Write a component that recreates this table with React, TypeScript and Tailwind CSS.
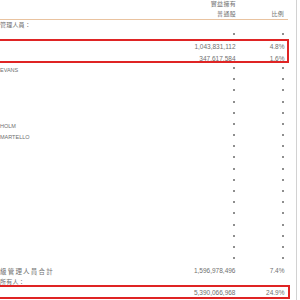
import React from 'react';

type Row = {
  label?: string;
  labelClass?: string;
  shares?: string;
  pct?: string;
  dash?: boolean;
};

const CJK = "font-['Noto_Sans_CJK_TC','Noto_Sans_CJK_SC',sans-serif]";
const LATIN = "font-['Liberation_Sans',Arial,sans-serif]";

const ROWS: Row[] = [
  { label: '管理人員：', labelClass: `${CJK} text-[6px] tracking-[0.2px]` },
  { dash: true },
  { shares: '1,043,831,112', pct: '4.8%' },
  { shares: '347,617,584', pct: '1.6%' },
  { label: 'EVANS', dash: true },
  { dash: true },
  { dash: true },
  { dash: true },
  { dash: true },
  { label: 'HOLM', dash: true },
  { label: 'MARTELLO', dash: true },
  { dash: true },
  { dash: true },
  { dash: true },
  { dash: true },
  { dash: true },
  { dash: true },
  { dash: true },
  { dash: true },
  { dash: true },
  { dash: true },
  { dash: true },
  { label: '級管理人員合計', labelClass: `${CJK} text-[6.5px] tracking-[1.2px]`, shares: '1,596,978,496', pct: '7.4%' },
  { label: '所有人：', labelClass: `${CJK} text-[6px] tracking-[0.2px]` },
  { shares: '5,390,066,968', pct: '24.9%' },
];

function Dash() {
  return <span className="inline-block w-[2px] h-[2px] bg-[#8e8e8e] mr-[0.5px] -translate-y-[2px]" />;
}

export default function App() {
  return (
    <div className="relative w-[300px] h-[300px] overflow-hidden bg-white text-[#707070]">
      <div className="flex h-full">
        <div className="w-[296px] overflow-hidden">
          {/* Header */}
          <div className={`grid grid-cols-[1fr_100px_48.5px] pr-[11.5px] h-[18.6px] ${CJK} text-[6px] tracking-[0.3px]`}>
            <div />
            <div className="flex flex-col items-end leading-[10px] -mt-[1.5px]">
              <span>實益擁有</span>
              <span>普通股</span>
            </div>
            <div className="flex flex-col items-end leading-[10px] -mt-[1.5px]">
              <span>&nbsp;</span>
              <span className="mr-[0.5px]">比例</span>
            </div>
          </div>
          <div className="w-[288px] h-px bg-[#e9c3a0]" />

          {/* Rows */}
          {ROWS.map((r, i) => (
            <div
              key={i}
              className={`grid grid-cols-[1fr_100px_48.5px] pr-[11.5px] h-[11.2px] items-center ${LATIN} text-[6.5px] leading-none`}
            >
              <div className="whitespace-nowrap">
                {r.label && (
                  <span className={r.labelClass ?? `${LATIN} text-[5.5px]`}>{r.label}</span>
                )}
              </div>
              <div className="flex justify-end pr-[0.5px]">
                {r.shares ? <span>{r.shares}</span> : r.dash ? <Dash /> : null}
              </div>
              <div className="flex justify-end">
                {r.pct ? <span>{r.pct}</span> : r.dash ? <Dash /> : null}
              </div>
            </div>
          ))}
        </div>
        <div className="w-px bg-[#d2d2d2]" />
      </div>

      {/* red highlight annotations */}
      <div className="absolute -left-[4px] top-[39px] w-[293px] h-[24px] border-2 border-[#df2424]" />
      <div className="absolute -left-[4px] top-[285px] w-[294px] h-[14px] border-2 border-[#df2424]" />
    </div>
  );
}
